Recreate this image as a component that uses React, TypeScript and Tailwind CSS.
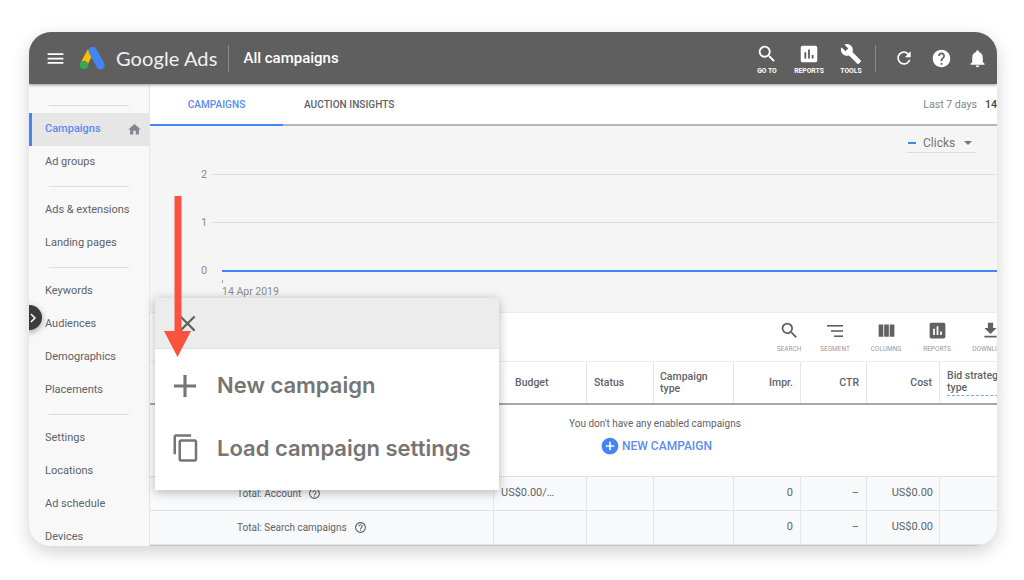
import {
  MdAdd,
  MdAddCircle,
  MdAssessment,
  MdBuild,
  MdChevronRight,
  MdClose,
  MdContentCopy,
  MdFileDownload,
  MdHelp,
  MdHelpOutline,
  MdHome,
  MdMenu,
  MdNotifications,
  MdRefresh,
  MdSearch,
  MdViewColumn,
} from "react-icons/md";
import type { ReactNode } from "react";

const navGroups = [
  ["Campaigns", "Ad groups"],
  ["Ads & extensions", "Landing pages"],
  ["Keywords", "Audiences", "Demographics", "Placements"],
  ["Settings", "Locations", "Ad schedule", "Devices"],
];

const Sidebar = () => (
  <aside className="w-[121px] shrink-0 border-r border-[#e6e6e6] bg-[#f8f8f8] pt-[21px] text-[11px] text-[#5f6368]">
    {navGroups.map((group) => (
      <div key={group[0]}>
        <div className="mx-[20px] mb-[6.7px] h-px bg-[#dedede]" />
        <div className="mb-[6.7px] flex flex-col">
          {group.map((item) =>
            item === "Campaigns" ? (
              <div
                key={item}
                className="flex h-[33.2px] items-center justify-between border-l-[3px] border-[#4285f4] bg-[#e6e6e6] pl-[13px] pr-[7px] font-medium text-[#5b8def]"
              >
                {item}
                <MdHome className="text-[15px] text-[#80868b]" />
              </div>
            ) : (
              <div key={item} className="flex h-[33.2px] items-center pl-[16px]">
                {item}
              </div>
            ),
          )}
        </div>
      </div>
    ))}
  </aside>
);

const HeaderAction = ({ icon, label }: { icon: ReactNode; label: string }) => (
  <div className="flex w-[42px] flex-col items-center text-white">
    <div className="flex h-[24px] items-center text-[22px]">{icon}</div>
    <span className="mt-[1px] whitespace-nowrap text-[6.8px] font-bold leading-[8px]">{label}</span>
  </div>
);

const Header = () => (
  <header className="z-10 flex h-[52px] shrink-0 items-center bg-[#5f5f5f] pl-[16px] text-white shadow-[0_1px_3px_rgba(0,0,0,0.4)]">
    <MdMenu className="text-[21px]" />
    <svg viewBox="0 0 26 23" className="ml-[13px] h-[23px] w-[26px]">
      <path d="M9 2 L2 15 L8 19 L13 9 Z" fill="#fbbc04" />
      <path d="M9.5 5 A4.2 4.2 0 0 1 17 1.6 L25 16 A4 4 0 0 1 18 20.5 Z" fill="#4285f4" />
      <circle cx="5" cy="18" r="4.3" fill="#34a853" />
    </svg>
    <span className="ml-[11px] font-['Lato',sans-serif] text-[20px] font-normal leading-none tracking-[0.1px] text-[#f1f1f1]">
      Google Ads
    </span>
    <div className="ml-[11px] h-[27px] w-px bg-[#8a8a8a]" />
    <span className="ml-[14px] text-[15px] font-medium">All campaigns</span>
    <div className="ml-auto flex items-center">
      <HeaderAction icon={<MdSearch />} label="GO TO" />
      <HeaderAction icon={<MdAssessment />} label="REPORTS" />
      <HeaderAction icon={<MdBuild />} label="TOOLS" />
      <div className="ml-[3px] h-[27px] w-px bg-[#8a8a8a]" />
      <MdRefresh className="ml-[18px] text-[20px]" />
      <MdHelp className="ml-[17px] text-[21px]" />
      <MdNotifications className="ml-[15px] mr-[9px] text-[21px]" />
    </div>
  </header>
);

const Tabs = () => (
  <div className="flex h-[42px] shrink-0 items-stretch border-b-2 border-[#b5b5b5] bg-white pt-[1px] text-[10.1px] font-medium">
    <div className="-mb-[2px] flex w-[133px] items-center justify-center border-b-2 border-[#4285f4] text-[#5b8def]">
      CAMPAIGNS
    </div>
    <div className="ml-[21px] flex items-center text-[#5f6368]">AUCTION INSIGHTS</div>
    <div className="ml-auto flex items-center whitespace-nowrap text-[10.6px] font-normal text-[#80868b]">
      Last 7 days
      <span className="ml-[8px] w-[12px] overflow-hidden font-medium text-[#3c4043]">14</span>
    </div>
  </div>
);

const Chart = () => (
  <div className="flex h-[186px] shrink-0 flex-col bg-[#f5f5f5] text-[#757575]">
    <div className="flex justify-end pr-[21px] pt-[8px]">
      <div className="flex h-[19px] w-[69px] items-center border-b border-[#dcdcdc] text-[12px]">
        <span className="ml-px h-[2.5px] w-[8px] bg-[#4285f4]" />
        <span className="ml-[7px]">Clicks</span>
        <span className="ml-[9px] h-0 w-0 border-x-[4px] border-t-[4px] border-x-transparent border-t-[#757575]" />
      </div>
    </div>
    <div className="mt-[21px] flex flex-col gap-[47px] pl-[51px] text-[11px] leading-[1px] text-[#8c8c8c]">
      <div className="flex h-px items-center">
        <span className="w-[11px]">2</span>
        <div className="h-px flex-1 bg-[#dddddd]" />
      </div>
      <div className="flex h-px items-center">
        <span className="w-[11px]">1</span>
        <div className="h-px flex-1 bg-[#dddddd]" />
      </div>
      <div className="flex h-px items-center">
        <span className="w-[21px]">0</span>
        <div className="h-[2px] flex-1 bg-[#4285f4]" />
      </div>
    </div>
    <div className="ml-[72px] mt-[9px] h-[3px] w-px bg-[#a0a0a0]" />
    <span className="ml-[72px] mt-[3px] text-[10.5px] leading-[12px] text-[#8c8c8c]">14 Apr 2019</span>
  </div>
);

const toolbarItems = [
  { label: "SEARCH", width: "w-[50px]", icon: <MdSearch /> },
  {
    label: "SEGMENT",
    width: "w-[42px]",
    icon: (
      <svg viewBox="0 0 20 20" className="h-[20px] w-[20px]" fill="currentColor">
        <rect x="2" y="4" width="16" height="1.6" />
        <rect x="6" y="9.2" width="12" height="1.6" />
        <rect x="9" y="14.4" width="9" height="1.6" />
      </svg>
    ),
  },
  { label: "COLUMNS", width: "w-[60px]", icon: <MdViewColumn /> },
  { label: "REPORTS", width: "w-[42px]", icon: <MdAssessment /> },
  { label: "DOWNLOAD", width: "w-[64px]", icon: <MdFileDownload /> },
];

const Toolbar = () => (
  <div className="flex h-[49px] shrink-0 border-t border-[#ececec] bg-white pl-[614px] text-[#616161]">
    {toolbarItems.map((item) => (
      <div key={item.label} className={`${item.width} flex shrink-0 flex-col items-center pt-[7px]`}>
        <div className="flex h-[21px] items-center text-[21px]">{item.icon}</div>
        <span className="mt-[4px] text-[6.5px] leading-[8px] text-[#9a9a9a]">{item.label}</span>
      </div>
    ))}
  </div>
);

const gridCols = "grid grid-cols-[344px_93px_67px_80px_67px_66px_73px_minmax(0,1fr)]";

const Cell = ({ children, className = "" }: { children?: ReactNode; className?: string }) => (
  <div className={`flex items-center border-r border-[#e6e6e6] ${className}`}>{children}</div>
);

const TotalRow = ({ label, budget }: { label: string; budget?: string }) => (
  <div className={`${gridCols} h-[34px] shrink-0 border-b border-[#e2e2e2] bg-[#f8f9fa] text-[10px] text-[#5f6368]`}>
    <Cell className="pl-[87px]">
      {label}
      <MdHelpOutline className="ml-[7px] text-[13px]" />
    </Cell>
    <Cell className="pl-[7px] text-[11px]">{budget}</Cell>
    <Cell />
    <Cell />
    <Cell className="justify-end pr-[7px] text-[11px]">0</Cell>
    <Cell className="justify-end pr-[7px] text-[11px]">–</Cell>
    <Cell className="justify-end pr-[6px] text-[11px]">US$0.00</Cell>
    <div />
  </div>
);

const Table = () => (
  <div className="flex flex-col">
    <div className={`${gridCols} h-[44px] shrink-0 border-b-2 border-t border-b-[#a8a8a8] border-t-[#ececec] bg-white text-[10.5px] font-medium leading-[12px] text-[#5f6368]`}>
      <Cell />
      <Cell className="pl-[21px]">Budget</Cell>
      <Cell className="pl-[7px]">Status</Cell>
      <Cell className="pl-[6px]">
        Campaign
        <br />
        type
      </Cell>
      <Cell className="justify-end pr-[7px]">Impr.</Cell>
      <Cell className="justify-end pr-[7px]">CTR</Cell>
      <Cell className="justify-end pr-[7px]">Cost</Cell>
      <div className="flex items-center pl-[7px]">
        <span className="whitespace-nowrap border-b border-dashed border-[#7ba6f5] pb-[1px]">
          Bid strategy
          <br />
          type
        </span>
      </div>
    </div>
    <div className="flex h-[72px] shrink-0 flex-col items-start border-b border-[#e2e2e2] bg-white pl-[419px] pt-[12px]">
      <span className="whitespace-nowrap text-[10px] leading-[14px] text-[#5f6368]">
        You don't have any enabled campaigns
      </span>
      <div className="mt-[5px] flex items-center pl-[31px] text-[12px] font-medium text-[#5b8def]">
        <MdAddCircle className="mr-[2px] text-[20px] text-[#4285f4]" />
        NEW CAMPAIGN
      </div>
    </div>
    <TotalRow label="Total: Account" budget="US$0.00/…" />
    <TotalRow label="Total: Search campaigns" />
    <div className="h-[2px] bg-[#c4c7cf]" />
  </div>
);

const CreateMenu = () => (
  <div className="absolute left-[126px] top-[266px] z-20 h-[192px] w-[344px] bg-white font-['Inter',sans-serif] text-[#757575] shadow-[0_2px_10px_rgba(0,0,0,0.28)]">
    <div className="flex h-[51px] items-center border-b border-[#dfdfdf] bg-[#ececec] pl-[19px] text-[#616161]">
      <MdClose className="text-[27px]" />
    </div>
    <div className="flex h-[73px] items-center pl-[11px]">
      <MdAdd className="text-[38px]" />
      <span className="ml-[13px] text-[22px] font-semibold">New campaign</span>
    </div>
    <div className="flex h-[52px] items-center pl-[16px]">
      <MdContentCopy className="text-[30px]" />
      <span className="ml-[16px] text-[22px] font-semibold">Load campaign settings</span>
    </div>
  </div>
);

export default function App() {
  return (
    <div className="h-[580px] w-[1024px] overflow-hidden bg-white pl-[29px] pt-[32px] font-['Roboto',sans-serif]">
      <div className="relative flex h-[514px] w-[968px] flex-col overflow-hidden rounded-[22px] bg-white shadow-[0_6px_18px_rgba(0,0,0,0.18)]">
        <Header />
        <div className="flex min-h-0 flex-1">
          <Sidebar />
          <main className="flex min-w-0 flex-1 flex-col overflow-hidden">
            <Tabs />
            <Chart />
            <Toolbar />
            <Table />
          </main>
        </div>

        {/* collapse handle */}
        <div className="absolute left-[-12px] top-[273px] z-20 flex h-[25px] w-[25px] items-center justify-end rounded-full bg-[#3c3c3c] text-white shadow-[0_2px_6px_rgba(0,0,0,0.35)]">
          <MdChevronRight className="text-[18px]" />
        </div>

        <CreateMenu />

        {/* red arrow */}
        <svg className="absolute left-[134px] top-[164px] z-30 h-[164px] w-[30px]" viewBox="0 0 30 164">
          <rect x="11.5" y="0" width="7" height="140" fill="#f9523f" />
          <path d="M1 135 H28 L14.5 161 Z" fill="#f9523f" />
        </svg>
      </div>
    </div>
  );
}
